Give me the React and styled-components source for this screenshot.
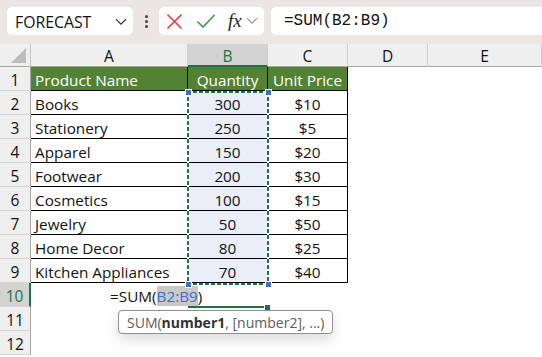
import styled, { createGlobalStyle } from "styled-components";

const GlobalStyle = createGlobalStyle`
  body {
    margin: 0;
    background: #ffffff;
    font-family: "Open Sans", "Noto Sans", sans-serif;
    overflow: hidden;
  }
`;

const GREEN = "#217346";
const HEADER_GREEN = "#548235";

const Page = styled.div`
  width: 542px;
  height: 357px;
  display: flex;
  flex-direction: column;
  overflow: hidden;
`;

const Toolbar = styled.div`
  height: 44px;
  flex: none;
  background: #ebe5e4;
  display: flex;
  align-items: center;
  padding: 0 0 2px 7px;
  box-sizing: border-box;
`;

const NameBox = styled.div`
  width: 126px;
  height: 28px;
  background: #fff;
  border-radius: 5px;
  display: flex;
  align-items: center;
  justify-content: space-between;
  padding: 1px 6px 0 8px;
  box-sizing: border-box;
  font-size: 15.8px;
  color: #111;
`;

const Dots = styled.div`
  width: 26px;
  display: flex;
  flex-direction: column;
  align-items: center;
  gap: 2px;

  span {
    width: 3px;
    height: 3px;
    border-radius: 50%;
    background: #444;
  }
`;

const ActionBox = styled.div`
  width: 105px;
  height: 28px;
  background: #fff;
  border-radius: 5px;
  display: flex;
  align-items: center;
  padding-left: 7px;
  gap: 13px;
  box-sizing: border-box;
`;

const Fx = styled.span`
  font-family: "Liberation Serif", serif;
  font-style: italic;
  font-size: 19px;
  color: #222;
  display: flex;
  align-items: center;
  gap: 4px;
  margin-left: -1px;
`;

const FormulaBox = styled.div`
  flex: 1;
  height: 28px;
  margin-left: 7px;
  background: #fff;
  border-radius: 5px 0 0 5px;
  display: flex;
  align-items: center;
  padding-left: 13px;
  font-family: "Liberation Mono", monospace;
  font-size: 16px;
  color: #111;
`;

const SheetWrap = styled.div`
  position: relative;
  flex: 1;
`;

const Sheet = styled.div`
  display: grid;
  grid-template-columns: 31px 157px 80px 80px 80px 1fr;
  grid-template-rows: 23px repeat(12, 24px);
  font-size: 15.3px;
  color: #111;
`;

const Corner = styled.div`
  background: #efefef;
  border-right: 1px solid #c8c8c8;
  border-bottom: 1px solid #a6a6a6;
  box-sizing: border-box;
  display: flex;
  align-items: flex-end;
  justify-content: flex-end;
  padding: 0 4px 3px 0;

  &::after {
    content: "";
    width: 0;
    height: 0;
    border-left: 15px solid transparent;
    border-bottom: 15px solid #bdbdbd;
  }
`;

const ColHeader = styled.div`
  background: ${(p) => (p.$active ? "#d3d3d3" : "#efefef")};
  color: ${(p) => (p.$active ? GREEN : "#111")};
  border-right: 1px solid #cfcfcf;
  border-bottom: ${(p) =>
    p.$active ? `2px solid ${GREEN}` : "1px solid #a6a6a6"};
  box-sizing: border-box;
  display: flex;
  align-items: center;
  justify-content: center;
  padding-top: 2px;
  font-size: 15.5px;
`;

const RowHeader = styled.div`
  background: ${(p) => (p.$active ? "#d3d3d3" : "#efefef")};
  color: ${(p) => (p.$active ? GREEN : "#111")};
  border-right: ${(p) =>
    p.$active ? `2px solid ${GREEN}` : "1px solid #a6a6a6"};
  border-bottom: 1px solid #d4d4d4;
  box-sizing: border-box;
  display: flex;
  align-items: center;
  justify-content: center;
  padding-top: 2px;
  font-size: 15.5px;
`;

const Cell = styled.div`
  box-sizing: border-box;
  display: flex;
  align-items: center;
  justify-content: ${(p) => (p.$align === "center" ? "center" : "flex-start")};
  padding: 2px 4px 0;
  white-space: nowrap;
  background: ${(p) =>
    p.$head ? HEADER_GREEN : p.$shaded ? "#e9eef8" : "#fff"};
  color: ${(p) => (p.$head ? "#fff" : "#111")};
  border-right: ${(p) => (p.$table ? "1px solid #000" : "none")};
  border-bottom: ${(p) => (p.$table ? "1px solid #000" : "none")};
`;

const EditCell = styled.div`
  grid-column: 2 / span 2;
  display: flex;
  align-items: center;
  padding: 2px 0 0 79px;
  white-space: nowrap;
`;

const RefText = styled.span`
  background: #c9c9c9;
  color: #3f6fc3;
`;

const Marquee = styled.div`
  position: absolute;
  left: 187px;
  top: 47px;
  width: 82px;
  height: 194px;
  background:
    repeating-linear-gradient(90deg, ${GREEN} 0 4px, #fff 4px 6px) top / 100% 2px no-repeat,
    repeating-linear-gradient(90deg, ${GREEN} 0 4px, #fff 4px 6px) bottom / 100% 2px no-repeat,
    repeating-linear-gradient(180deg, ${GREEN} 0 4px, #fff 4px 6px) left / 2px 100% no-repeat,
    repeating-linear-gradient(180deg, ${GREEN} 0 4px, #fff 4px 6px) right / 2px 100% no-repeat;
`;

const Handle = styled.div`
  position: absolute;
  width: 5px;
  height: 5px;
  background: #3d6fc4;
  border: 1px solid #fff;
  left: ${(p) => p.$x}px;
  top: ${(p) => p.$y}px;
`;

const ActiveLine = styled.div`
  position: absolute;
  left: 188px;
  top: 262px;
  width: 80px;
  height: 2px;
  background: ${GREEN};

  &::after {
    content: "";
    position: absolute;
    right: -2px;
    top: -2px;
    width: 5px;
    height: 5px;
    background: ${GREEN};
    border: 1px solid #fff;
    border-right: none;
  }
`;

const Tip = styled.div`
  position: absolute;
  left: 118px;
  top: 266px;
  height: 24px;
  padding: 1px 8px 0;
  box-sizing: border-box;
  display: flex;
  align-items: center;
  background: #fff;
  border: 1px solid #8f8f8f;
  border-radius: 4px;
  box-shadow: 0 6px 14px rgba(0, 0, 0, 0.14);
  font-size: 14px;
  color: #5c5c5c;
  white-space: nowrap;

  b {
    color: #333;
    font-weight: 700;
  }
`;

const Cross = () => (
  <svg width="17" height="17" viewBox="0 0 17 17">
    <path d="M1.5 1.5L15.5 15.5M15.5 1.5L1.5 15.5" stroke="#e0393e" strokeWidth="1.6" fill="none" />
  </svg>
);

const Check = () => (
  <svg width="20" height="16" viewBox="0 0 20 16">
    <path d="M1.5 8.5L7 14L18.5 2" stroke="#3b9b4e" strokeWidth="1.6" fill="none" />
  </svg>
);

const Chevron = ({ color = "#333", size = 12 }) => (
  <svg width={size} height={size * 0.6} viewBox="0 0 12 7">
    <path d="M1 1L6 6L11 1" stroke={color} strokeWidth="1.3" fill="none" />
  </svg>
);

const columns = ["A", "B", "C", "D", "E"];

const products = [
  ["Books", 300, "$10"],
  ["Stationery", 250, "$5"],
  ["Apparel", 150, "$20"],
  ["Footwear", 200, "$30"],
  ["Cosmetics", 100, "$15"],
  ["Jewelry", 50, "$50"],
  ["Home Decor", 80, "$25"],
  ["Kitchen Appliances", 70, "$40"],
];

const Blank = ({ n }) =>
  Array.from({ length: n }, (_, i) => <Cell key={i} />);

const App = () => {
  return (
    <Page>
      <GlobalStyle />
      <Toolbar>
        <NameBox>
          FORECAST
          <Chevron />
        </NameBox>
        <Dots>
          <span />
          <span />
          <span />
        </Dots>
        <ActionBox>
          <Cross />
          <Check />
          <Fx>
            fx
            <Chevron color="#9a9a9a" size={12} />
          </Fx>
        </ActionBox>
        <FormulaBox>=SUM(B2:B9)</FormulaBox>
      </Toolbar>

      <SheetWrap>
        <Sheet>
          <Corner />
          {columns.map((c) => (
            <ColHeader key={c} $active={c === "B"}>
              {c}
            </ColHeader>
          ))}

          <RowHeader>1</RowHeader>
          <Cell $head $table>Product Name</Cell>
          <Cell $head $table $align="center">Quantity</Cell>
          <Cell $head $table $align="center">Unit Price</Cell>
          <Blank n={2} />

          {products.map(([name, qty, price], i) => (
            <Row key={name} n={i + 2} name={name} qty={qty} price={price} />
          ))}

          <RowHeader $active>10</RowHeader>
          <EditCell>
            =SUM(<RefText>B2:B9</RefText>)
          </EditCell>
          <Blank n={3} />

          <RowHeader>11</RowHeader>
          <Blank n={5} />
          <RowHeader>12</RowHeader>
          <Blank n={5} />
        </Sheet>

        <Marquee />
        <Handle $x={185} $y={45} />
        <Handle $x={265} $y={45} />
        <Handle $x={185} $y={237} />
        <Handle $x={265} $y={237} />
        <ActiveLine />

        <Tip>
          SUM(<b>number1</b>, [number2], ...)
        </Tip>
      </SheetWrap>
    </Page>
  );
};

const Row = ({ n, name, qty, price }) => (
  <>
    <RowHeader>{n}</RowHeader>
    <Cell $table>{name}</Cell>
    <Cell $table $shaded $align="center">{qty}</Cell>
    <Cell $table $align="center">{price}</Cell>
    <Blank n={2} />
  </>
);

export default App;
